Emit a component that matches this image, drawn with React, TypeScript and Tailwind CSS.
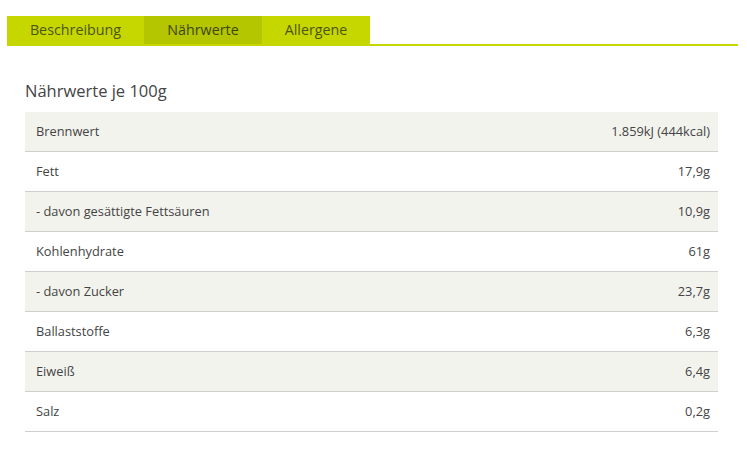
import React from "react";

const rows: [string, string][] = [
  ["Brennwert", "1.859kJ (444kcal)"],
  ["Fett", "17,9g"],
  ["- davon gesättigte Fettsäuren", "10,9g"],
  ["Kohlenhydrate", "61g"],
  ["- davon Zucker", "23,7g"],
  ["Ballaststoffe", "6,3g"],
  ["Eiweiß", "6,4g"],
  ["Salz", "0,2g"],
];

export default function App() {
  return (
    <div className="w-[747px] h-[454px] bg-white" style={{ fontFamily: '"Open Sans", sans-serif' }}>
      <div className="pt-[16px] pl-[7px] pr-[9px]">
        <div className="flex border-b-2 border-[#c5d600]">
          <div className="w-[137px] h-[28px] bg-[#c6d700] text-[#4d5416] text-[14.3px] flex items-center justify-center">Beschreibung</div>
          <div className="w-[118px] h-[28px] bg-[#b3c600] text-[#3f4510] text-[14.3px] flex items-center justify-center">Nährwerte</div>
          <div className="w-[108px] h-[28px] bg-[#c6d700] text-[#4d5416] text-[14.3px] flex items-center justify-center">Allergene</div>
        </div>
      </div>
      <div className="pl-[25px] pr-[29px] pt-[34px]">
        <div className="text-[16.5px] text-[#444] leading-[22px] mb-[10px]">Nährwerte je 100g</div>
        <div>
          {rows.map(([k, v], i) => (
            <div
              key={k}
              className={`h-[40px] flex items-center justify-between pl-[11px] pr-[8px] border-b border-[#cfcfcc] text-[12.8px] text-[#444] ${i % 2 === 0 ? "bg-[#f3f3ee]" : "bg-white"}`}
            >
              <span>{k}</span>
              <span>{v}</span>
            </div>
          ))}
        </div>
      </div>
    </div>
  );
}
